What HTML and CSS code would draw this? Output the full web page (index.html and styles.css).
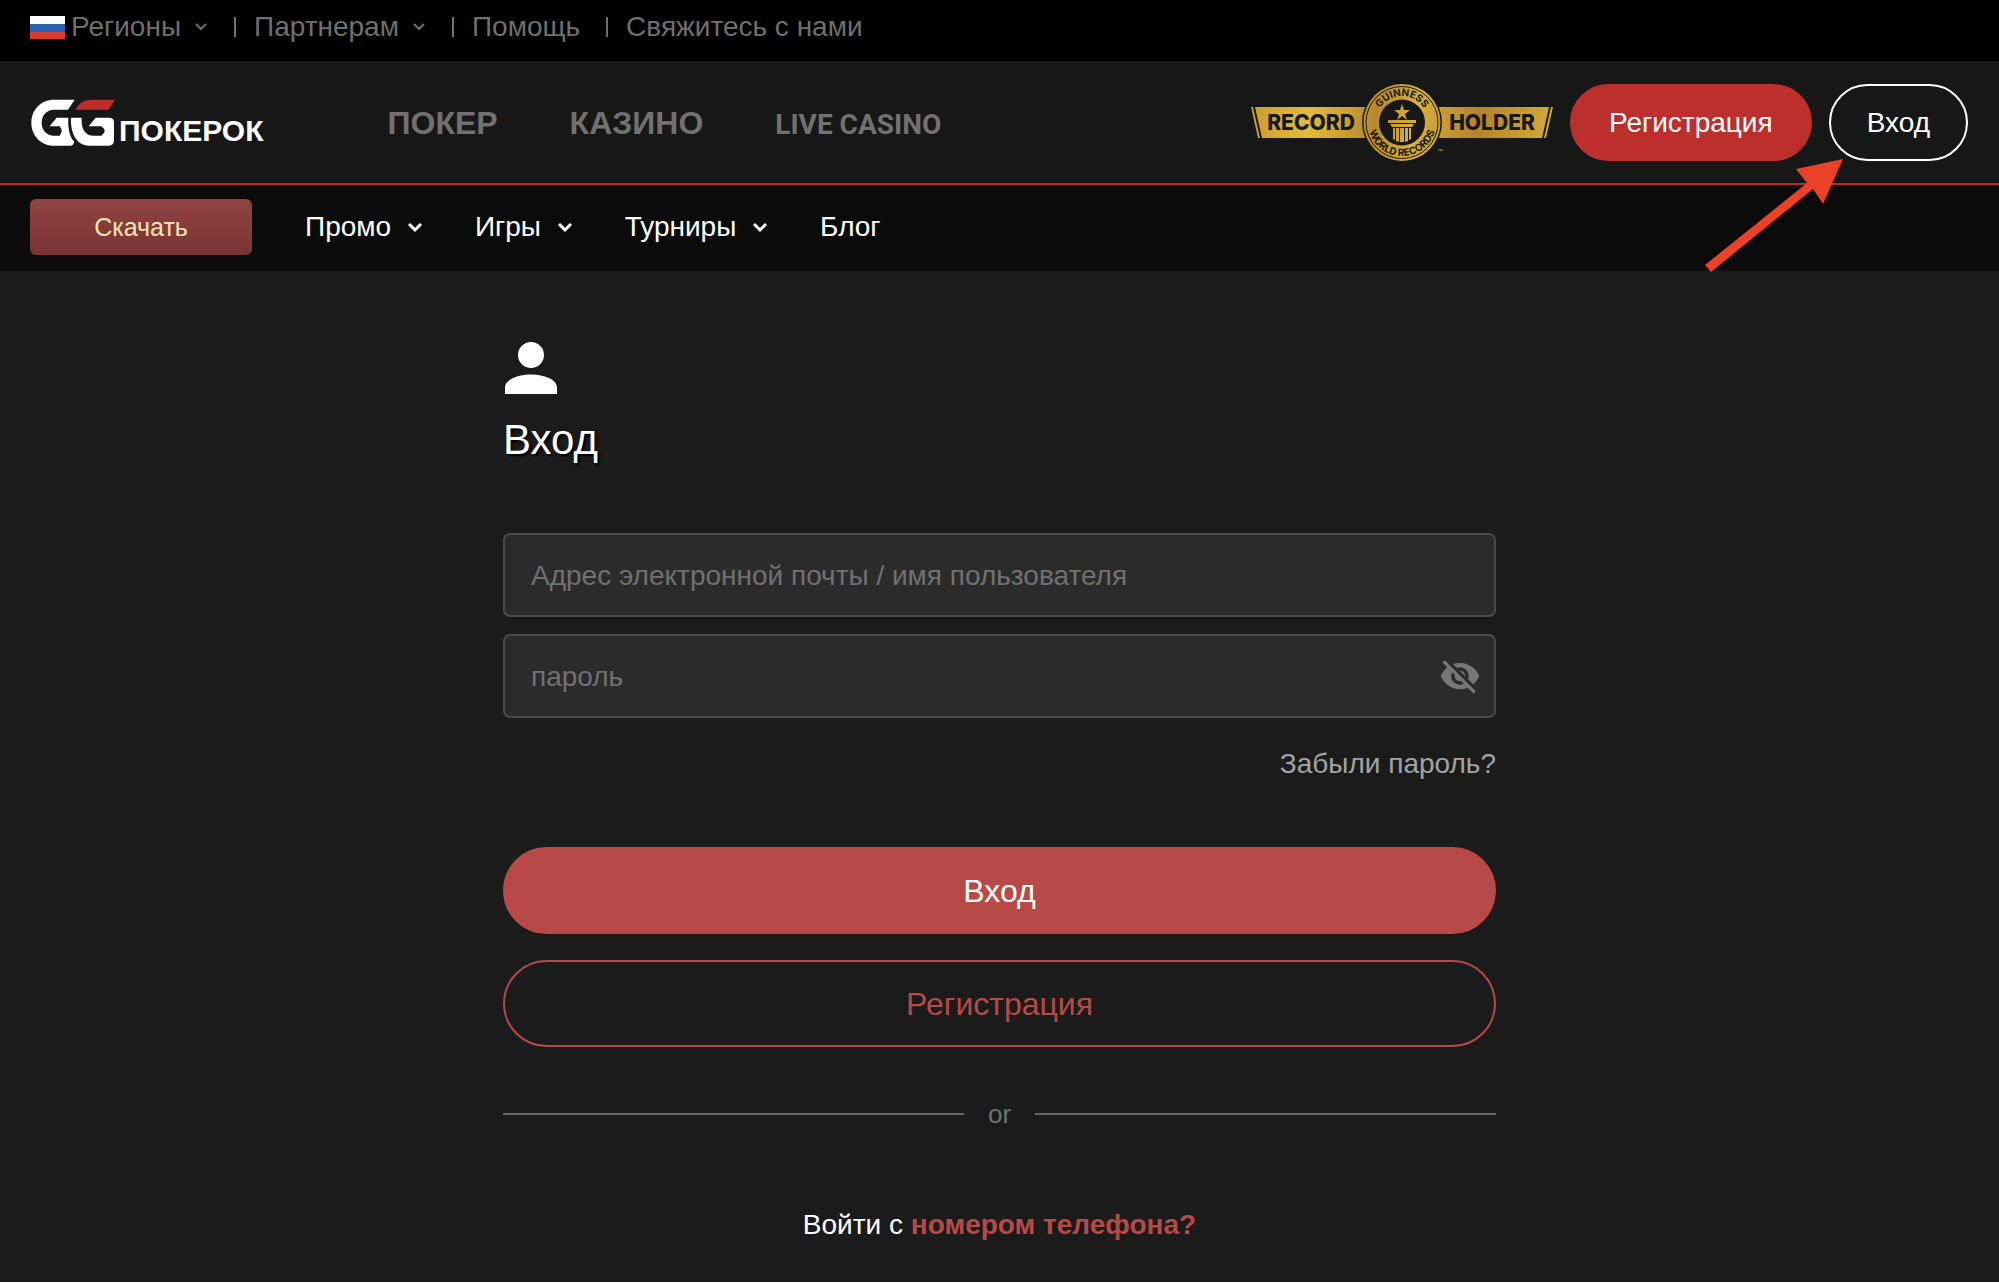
FILE: index.html
```html
<!DOCTYPE html>
<html lang="ru">
<head>
	<meta charset="UTF-8">
	<meta name="viewport" content="width=device-width, initial-scale=1">
	<title>Вход</title>
	<link rel="stylesheet" href="styles.css">
</head>
<body>
<div class="topbar">
	<ul class="top-list">
		<li>
			<a href="#">
				<svg class="flag" viewBox="0 0 35 23"><path fill="#fff" d="M0 0h35v8H0z"/><path fill="#2a62b0" d="M0 8h35v8H0z"/><path fill="#d93a2b" d="M0 16h35v7H0z"/></svg>
				<span>Регионы</span>
				<svg class="arrow" viewBox="0 0 14 10"><path d="M2 2l5 5 5-5"/></svg>
			</a>
		</li>
		<li>
			<a href="#">
				<span>Партнерам</span>
				<svg class="arrow" viewBox="0 0 14 10"><path d="M2 2l5 5 5-5"/></svg>
			</a>
		</li>
		<li><a href="#">Помощь</a></li>
		<li><a href="#">Свяжитесь с нами</a></li>
	</ul>
</div>
<header class="header">
	<a class="logo" href="#">
		<svg class="logo-mark" viewBox="96 58 252 141">
			<path fill="#fff" d="M227 60H165C125 60 97 91 97 129S125 198 165 198H216Q226 196 225 185C211 172 206 140 208 114H173L152 140H182Q194 154 182 168H165C143 168 128 151 128 129S143 90 165 90H207Z"/>
			<path fill="#bd2f2c" d="M230 90C239 71 254 60 276 60H348L328 90Z"/>
			<path fill="#fff" d="M216 114H248C246 146 257 168 284 168H307Q327 154 307 140H269L290 114H332Q345 115 345 128V183Q344 197 330 198H271C230 197 214 157 216 114Z"/>
		</svg>
		<span class="logo-text">ПОКЕРОК</span>
	</a>
	<nav class="main-nav">
		<a href="#">ПОКЕР</a>
		<a href="#">КАЗИНО</a>
		<a class="narrow" href="#">LIVE CASINO</a>
	</nav>
	<div class="account">
		<svg class="badge" viewBox="0 0 302 77">
			<defs>
				<linearGradient id="gold" gradientUnits="userSpaceOnUse" x1="0" y1="0" x2="302" y2="40">
					<stop offset="0" stop-color="#c9992b"/>
					<stop offset=".2" stop-color="#e0bb3e"/>
					<stop offset=".42" stop-color="#b8892b"/>
					<stop offset=".55" stop-color="#d9b13a"/>
					<stop offset=".75" stop-color="#b4842b"/>
					<stop offset="1" stop-color="#d4ab36"/>
				</linearGradient>
				<path id="arcTop" d="M125 39v-1a26 26 0 0 1 52 0v1"/>
				<path id="arcBottom" d="M117 34v4a34 34 0 0 0 68 0v-4"/>
			</defs>
			<g fill="url(#gold)">
				<path d="M0 23h2l7 31H7zM4 23h110v31H11zM302 23h-2l-7 31h2zM298 23H188v31h103z"/>
			</g>
			<circle cx="151" cy="38.500" r="40" fill="#171717"/>
			<circle cx="151" cy="38.500" r="38.500" fill="url(#gold)"/>
			<circle cx="151" cy="38.500" r="36" fill="none" stroke="#171717"/>
			<circle cx="151" cy="38.500" r="23" fill="#171717"/>
			<text class="badge-word" x="60" y="46">RECORD</text>
			<text class="badge-word" x="241" y="46">HOLDER</text>
			<text class="badge-ring"><textPath href="#arcTop" startOffset="50%">GUINNESS</textPath></text>
			<text class="badge-ring"><textPath href="#arcBottom" startOffset="50%">WORLD RECORDS</textPath></text>
			<text class="badge-tm" x="186" y="69">™</text>
			<g fill="url(#gold)">
				<path d="M151 20l2 6h6l-5 4 2 6-5-4-5 4 2-6-5-4h6zM137 36h28v3h-28zM139 40h24l-2 3h-20zM142 44h2v12l-2-1zM145 44h3v14l-3-1zM149 44h4v14h-4zM154 44h3v13l-3 1zM158 44h2v11l-2 1z"/>
			</g>
		</svg>
		<button class="btn btn-reg" type="button">Регистрация</button>
		<button class="btn btn-login" type="button">Вход</button>
	</div>
	<svg class="pointer" viewBox="0 0 138 113"><path fill="#ec4027" d="M138 0L91 10l11 14L0 106l6 7 102-83 10 15z"/></svg>
</header>
<nav class="subnav">
	<a class="download" href="#">Скачать</a>
	<a href="#">Промо <svg class="arrow" viewBox="0 0 14 10"><path d="M1 1l6 6 6-6"/></svg></a>
	<a href="#">Игры <svg class="arrow" viewBox="0 0 14 10"><path d="M1 1l6 6 6-6"/></svg></a>
	<a href="#">Турниры <svg class="arrow" viewBox="0 0 14 10"><path d="M1 1l6 6 6-6"/></svg></a>
	<a href="#">Блог</a>
</nav>
<main class="main">
	<form class="login">
		<svg class="user" viewBox="4 4 16 16"><path fill="#fff" d="M12 12a4 4 0 1 0 0-8 4 4 0 0 0 0 8zm0 2c-4 0-8 1.500-8 4v2h16v-2c0-2.500-4-4-8-4z"/></svg>
		<h1>Вход</h1>
		<div class="field">
			<input type="text" id="user" aria-label="Адрес электронной почты / имя пользователя" placeholder="Адрес электронной почты / имя пользователя">
		</div>
		<div class="field">
			<input type="password" id="pass" aria-label="пароль" placeholder="пароль">
			<button class="eye" type="button" aria-label="Показать пароль">
				<svg viewBox="0 0 24 24"><path fill="#777" d="M12 7c2.760 0 5 2.240 5 5 0 .650-.130 1.260-.360 1.830l2.920 2.920c1.510-1.260 2.700-2.890 3.430-4.750-1.730-4.390-6-7.500-11-7.500-1.400 0-2.740.250-3.980.700l2.160 2.160C10.740 7.130 11.350 7 12 7zM2 4.270l2.280 2.280.460.460C3.080 8.300 1.780 10.020 1 12c1.730 4.390 6 7.500 11 7.500 1.550 0 3.030-.300 4.380-.840l.420.420L19.730 22 21 20.730 3.270 3 2 4.270zM7.530 9.800l1.550 1.550c-.050.210-.080.430-.080.650 0 1.660 1.340 3 3 3 .220 0 .440-.030.650-.080l1.550 1.550c-.670.330-1.410.530-2.200.530-2.760 0-5-2.240-5-5 0-.790.200-1.530.530-2.200zm4.310-.780l3.150 3.150.020-.160c0-1.660-1.340-3-3-3l-.170.010z"/></svg>
			</button>
		</div>
		<a class="forgot" href="#">Забыли пароль?</a>
		<button class="big big-login" type="submit">Вход</button>
		<button class="big big-reg" type="button">Регистрация</button>
		<div class="or">or</div>
		<p class="phone">Войти с <a href="#">номером телефона?</a></p>
	</form>
</main>
</body>
</html>
```
FILE: styles.css
```css
*{
	margin: 0;
	padding: 0;
	box-sizing: border-box;
}
body{
	min-height: 100vh;
	background: #1b1b1b;
	border-bottom: 1px solid #fff;
	color: #fff;
	font-family: "Liberation Sans", Arial, sans-serif;
	font-size: 28px;
}
li{
	list-style: none;
}
a{
	color: inherit;
	text-decoration: none;
}
button,input{
	font: inherit;
	color: inherit;
}
button{
	cursor: pointer;
}
.arrow{
	width: 14px;
	height: 10px;
	fill: none;
	stroke: currentColor;
	stroke-width: 2;
}

/* top bar */
.topbar{
	background: #000;
	color: #6f6f6f;
	padding: 0 30px 7px;
}
.top-list{
	display: flex;
	line-height: 54px;
}
.top-list li{
	display: flex;
	align-items: center;
}
.top-list li+li:before{
	content: "";
	width: 2px;
	height: 20px;
	margin: 0 18px 0 26px;
	background: #6f6f6f;
}
.top-list a{
	display: flex;
	align-items: center;
}
.flag{
	width: 35px;
	height: 23px;
	margin-right: 6px;
}
.top-list .arrow{
	margin-left: 13px;
}

/* header */
.header{
	position: relative;
	display: flex;
	align-items: center;
	height: 124px;
	padding: 0 31px;
	background: #171717;
	border-bottom: 2px solid #b92d29;
}
.logo{
	display: flex;
	align-items: flex-end;
	gap: 4px;
}
.logo-mark{
	width: 84px;
	height: 47px;
}
.logo-text{
	font-size: 30px;
	font-weight: bold;
	line-height: 30px;
}
.main-nav{
	display: flex;
	align-items: baseline;
	gap: 72px;
	margin-left: 124px;
	padding-top: 3px;
	color: #717171;
	font-size: 32px;
	font-weight: bold;
}
.narrow{
	font-family: "Liberation Sans Narrow", Roboto, sans-serif;
	font-size: 28px;
}
.account{
	display: flex;
	align-items: center;
	gap: 17px;
	margin-left: auto;
}
.badge{
	width: 302px;
	height: 77px;
}
.badge-word{
	fill: #171717;
	font: 800 21px Inter, sans-serif;
	text-anchor: middle;
}
.badge-ring{
	fill: #171717;
	font: 700 10px Inter, sans-serif;
	text-anchor: middle;
}
.badge-tm{
	fill: #c9992b;
	font-size: 6px;
}
.btn{
	height: 77px;
	padding: 2px 36px 0;
	border: 2px solid #bd2f2c;
	border-radius: 39px;
	background: #bd2f2c;
}
.btn-reg{
	padding: 2px 37px 0;
}
.btn-login{
	border-color: #fff;
	background: none;
}
.pointer{
	position: absolute;
	top: 98px;
	right: 156px;
	width: 138px;
	height: 113px;
}

/* second menu */
.subnav{
	display: flex;
	align-items: center;
	gap: 53px;
	height: 86px;
	padding: 0 30px 3px;
	background: #0b0b0b;
}
.subnav .arrow{
	margin-left: 9px;
	stroke-width: 3;
	vertical-align: middle;
}
.download{
	width: 222px;
	border-radius: 6px;
	background: linear-gradient(#914342, #783433);
	color: #fbe5b6;
	font-size: 25px;
	line-height: 56px;
	text-align: center;
}

/* login form */
.main{
	padding: 71px 20px 0;
}
.login{
	display: flex;
	flex-direction: column;
	max-width: 993px;
	margin: 0 auto;
}
.user{
	width: 52px;
	height: 52px;
	margin-left: 2px;
}
.login h1{
	margin: 19px 0 67px;
	font-size: 42px;
	font-weight: normal;
	line-height: 53px;
	text-shadow: 2px 2px 2px #000;
}
.field{
	display: flex;
	align-items: center;
	height: 84px;
	margin-bottom: 17px;
	padding: 0 13px 0 26px;
	border: 2px solid #4a4a4a;
	border-radius: 7px;
	background: #2b2b2b;
}
.field input{
	flex: 1;
	height: 80px;
	padding-top: 2px;
	border: none;
	outline: none;
	background: none;
}
.field input::placeholder{
	color: #717171;
}
.eye{
	height: 42px;
	border: none;
	background: none;
}
.eye svg{
	width: 42px;
	height: 42px;
}
.forgot{
	align-self: flex-end;
	margin: 13px 0 67px;
	color: #a3a3a3;
	line-height: 32px;
}
.big{
	height: 87px;
	margin-bottom: 26px;
	padding-top: 2px;
	border: 2px solid #b74a46;
	border-radius: 44px;
	font-size: 32px;
}
.big-login{
	background: #b74a46;
}
.big-reg{
	background: none;
	color: #b74a46;
}
.or{
	display: flex;
	align-items: center;
	gap: 24px;
	margin-top: 23px;
	color: #717171;
	font-size: 26px;
	line-height: 36px;
}
.or:before,.or:after{
	content: "";
	flex: 1;
	height: 2px;
	background: #666;
}
.phone{
	margin-top: 75px;
	line-height: 36px;
	text-align: center;
}
.phone a{
	color: #b74a46;
	font-weight: bold;
}
```
